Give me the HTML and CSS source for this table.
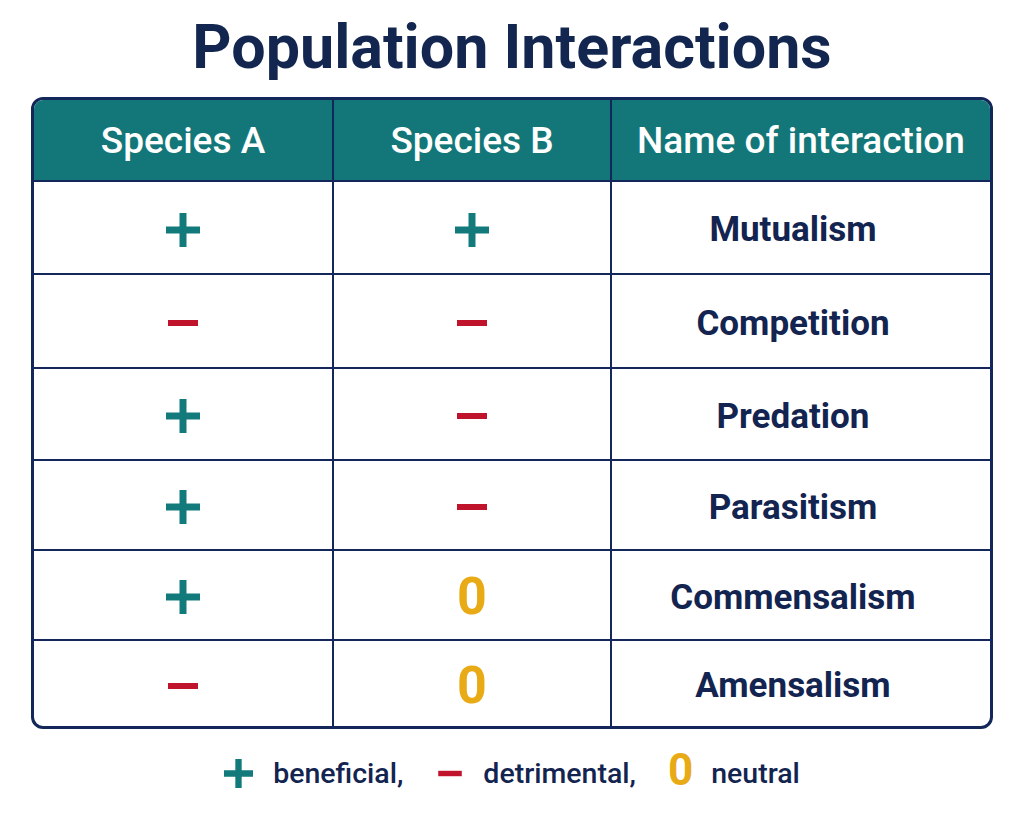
FILE: index.html
```html
<!DOCTYPE html>
<html lang="en">
<head>
<meta charset="utf-8">
<title>Population Interactions</title>
<link rel="stylesheet" href="styles.css">
</head>
<body>
<main class="page">
  <h1 class="title">Population Interactions</h1>
  <table class="grid">
    <thead>
      <tr>
        <th class="c1">Species A</th>
        <th class="c2">Species B</th>
        <th class="c3">Name of interaction</th>
      </tr>
    </thead>
    <tbody>
      <tr class="r1">
        <td><svg class="sym" viewBox="0 0 34 34"><path class="plus" d="M0 17H34M17 0V34"/></svg></td>
        <td><svg class="sym" viewBox="0 0 34 34"><path class="plus" d="M0 17H34M17 0V34"/></svg></td>
        <td class="name">Mutualism</td>
      </tr>
      <tr class="r2">
        <td><svg class="sym" viewBox="0 0 34 34"><path class="minus" d="M2 17H32"/></svg></td>
        <td><svg class="sym" viewBox="0 0 34 34"><path class="minus" d="M2 17H32"/></svg></td>
        <td class="name">Competition</td>
      </tr>
      <tr class="r3">
        <td><svg class="sym" viewBox="0 0 34 34"><path class="plus" d="M0 17H34M17 0V34"/></svg></td>
        <td><svg class="sym" viewBox="0 0 34 34"><path class="minus" d="M2 17H32"/></svg></td>
        <td class="name">Predation</td>
      </tr>
      <tr class="r4">
        <td><svg class="sym" viewBox="0 0 34 34"><path class="plus" d="M0 17H34M17 0V34"/></svg></td>
        <td><svg class="sym" viewBox="0 0 34 34"><path class="minus" d="M2 17H32"/></svg></td>
        <td class="name">Parasitism</td>
      </tr>
      <tr class="r5">
        <td><svg class="sym" viewBox="0 0 34 34"><path class="plus" d="M0 17H34M17 0V34"/></svg></td>
        <td><span class="zero">0</span></td>
        <td class="name">Commensalism</td>
      </tr>
      <tr class="r6">
        <td><svg class="sym" viewBox="0 0 34 34"><path class="minus" d="M2 17H32"/></svg></td>
        <td><span class="zero">0</span></td>
        <td class="name">Amensalism</td>
      </tr>
    </tbody>
  </table>
  <p class="legend">
    <svg class="lsym" viewBox="0 0 32 32"><path class="plus" d="M0 16H32M16 0V32"/></svg>
    <span class="ltext">beneficial,</span>
    <svg class="lsym lminus" viewBox="0 0 26 32"><path class="minus" d="M0 16H26"/></svg>
    <span class="ltext">detrimental,</span>
    <span class="lzero">0</span>
    <span class="ltext">neutral</span>
  </p>
</main>
</body>
</html>
```

FILE: styles.css
```css
html, body {
  margin: 0;
  padding: 0;
  background: #ffffff;
}
body {
  font-family: Roboto, "Liberation Sans", sans-serif;
  color: #12244f;
}
.page {
  width: 1024px;
  height: 820px;
  display: flex;
  flex-direction: column;
  align-items: center;
}
.title {
  margin: 12px 0 0 0;
  height: 85px;
  font-size: 61px;
  font-weight: 700;
  line-height: 70px;
  color: #13264f;
  letter-spacing: 0;
}
.grid {
  width: 962px;
  border-collapse: separate;
  border-spacing: 0;
  border: 3px solid #14275a;
  border-radius: 12px;
  overflow: hidden;
  table-layout: fixed;
}
.grid th {
  background: #137779;
  color: #ffffff;
  font-size: 37px;
  font-weight: 500;
  height: 80px;
  padding: 0;
  text-align: center;
  vertical-align: middle;
}
.grid th + th, .grid td + td {
  border-left: 2px solid #14275a;
}
.c1 { width: 298px; }
.c2 { width: 276px; }
.grid td {
  border-top: 2px solid #14275a;
  padding: 4px 0 0 0;
  text-align: center;
  vertical-align: middle;
}
.r1 td { height: 87px; }
.r2 td { height: 88px; }
.r3 td { height: 86px; }
.r4 td { height: 84px; }
.r5 td { height: 84px; }
.r6 td { height: 81px; }
.grid td.name {
  font-size: 35px;
  font-weight: 700;
  color: #12244f;
  padding-right: 16px;
}
.sym {
  width: 34px;
  height: 34px;
  display: block;
  margin: 0 auto;
}
.plus {
  stroke: #137a7c;
  stroke-width: 7;
  fill: none;
}
.minus {
  stroke: #c0142c;
  stroke-width: 6;
  fill: none;
}
.zero {
  font-size: 52px;
  font-weight: 700;
  color: #e8aa15;
  line-height: 1;
  display: inline-block;
}
.legend {
  margin: 22px 0 0 0;
  display: flex;
  align-items: center;
}
.lsym {
  width: 29px;
  height: 29px;
  margin-right: 20px;
}
.lminus {
  width: 26px;
  margin-left: 34px;
  margin-right: 20px;
}
.ltext {
  font-size: 28.5px;
  font-weight: 500;
  color: #12244f;
}
.lzero {
  font-size: 44px;
  font-weight: 700;
  color: #e8aa15;
  margin-left: 32px;
  margin-right: 18px;
  line-height: 1;
  position: relative;
  top: -3px;
}
```
